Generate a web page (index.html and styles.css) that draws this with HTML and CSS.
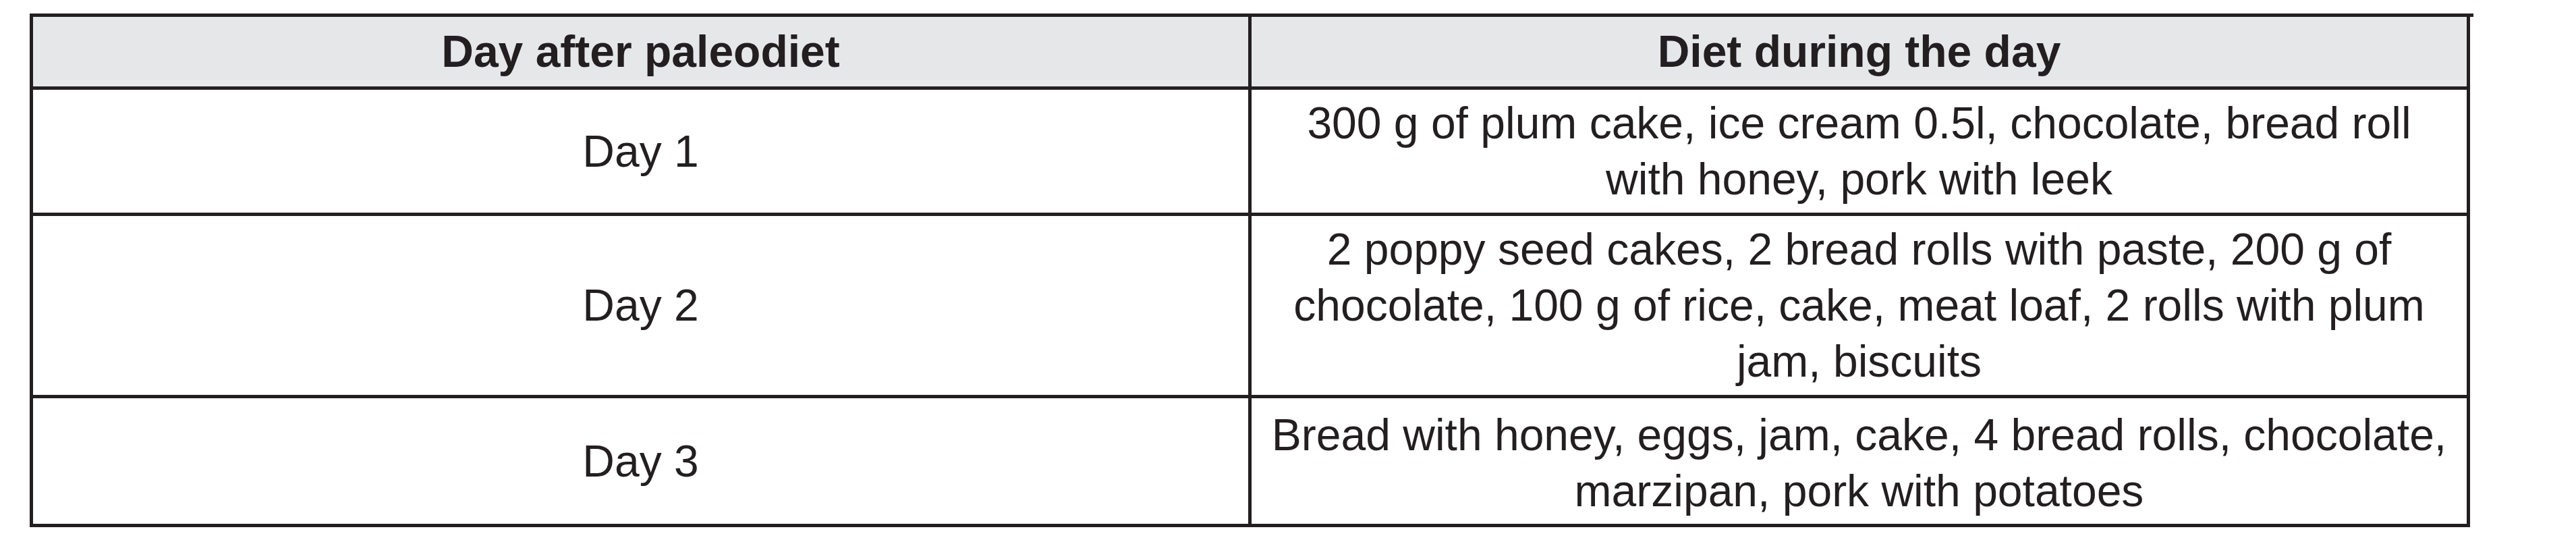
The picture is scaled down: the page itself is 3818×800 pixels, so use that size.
FILE: index.html
```html
<!DOCTYPE html>
<html lang="en">
<head>
<meta charset="utf-8">
<title>Diet after paleodiet</title>
<link rel="stylesheet" href="styles.css">
</head>
<body>
<div class="diet-table" role="table">
  <div class="cell head" role="columnheader">Day after paleodiet</div>
  <div class="cell head" role="columnheader">Diet during the day</div>

  <div class="cell day" role="cell">Day 1</div>
  <div class="cell menu" role="cell">300 g of plum cake, ice cream 0.5l, chocolate, bread roll with honey, pork with leek</div>

  <div class="cell day" role="cell">Day 2</div>
  <div class="cell menu" role="cell">2 poppy seed cakes, 2 bread rolls with paste, 200 g of chocolate, 100 g of rice, cake, meat loaf, 2 rolls with plum jam, biscuits</div>

  <div class="cell day" role="cell">Day 3</div>
  <div class="cell menu last" role="cell">Bread with honey, eggs, jam, cake, 4 bread rolls, chocolate, marzipan, pork with potatoes</div>
</div>
</body>
</html>
```
FILE: styles.css
```css
html, body {
  margin: 0;
  padding: 0;
  background: #ffffff;
}

body {
  font-family: "Liberation Sans", Arial, Helvetica, sans-serif;
  color: #231f20;
}

.diet-table {
  margin: 20px 0 0 44px;
  width: 3617px;
  display: grid;
  grid-template-columns: 1806px 1806px;
  grid-template-rows: 108px 187px 270px 191px;
  border-top: 5px solid #231f20;
  border-left: 5px solid #231f20;
}

.cell {
  box-sizing: border-box;
  border-right: 5px solid #231f20;
  border-bottom: 5px solid #231f20;
  display: flex;
  align-items: center;
  justify-content: center;
  text-align: center;
  font-size: 66px;
  line-height: 83px;
}

.head {
  background: #e6e7e9;
  font-weight: bold;
}

.menu {
  padding: 0 21px;
}

.menu.last {
  padding-top: 6px;
}
```
